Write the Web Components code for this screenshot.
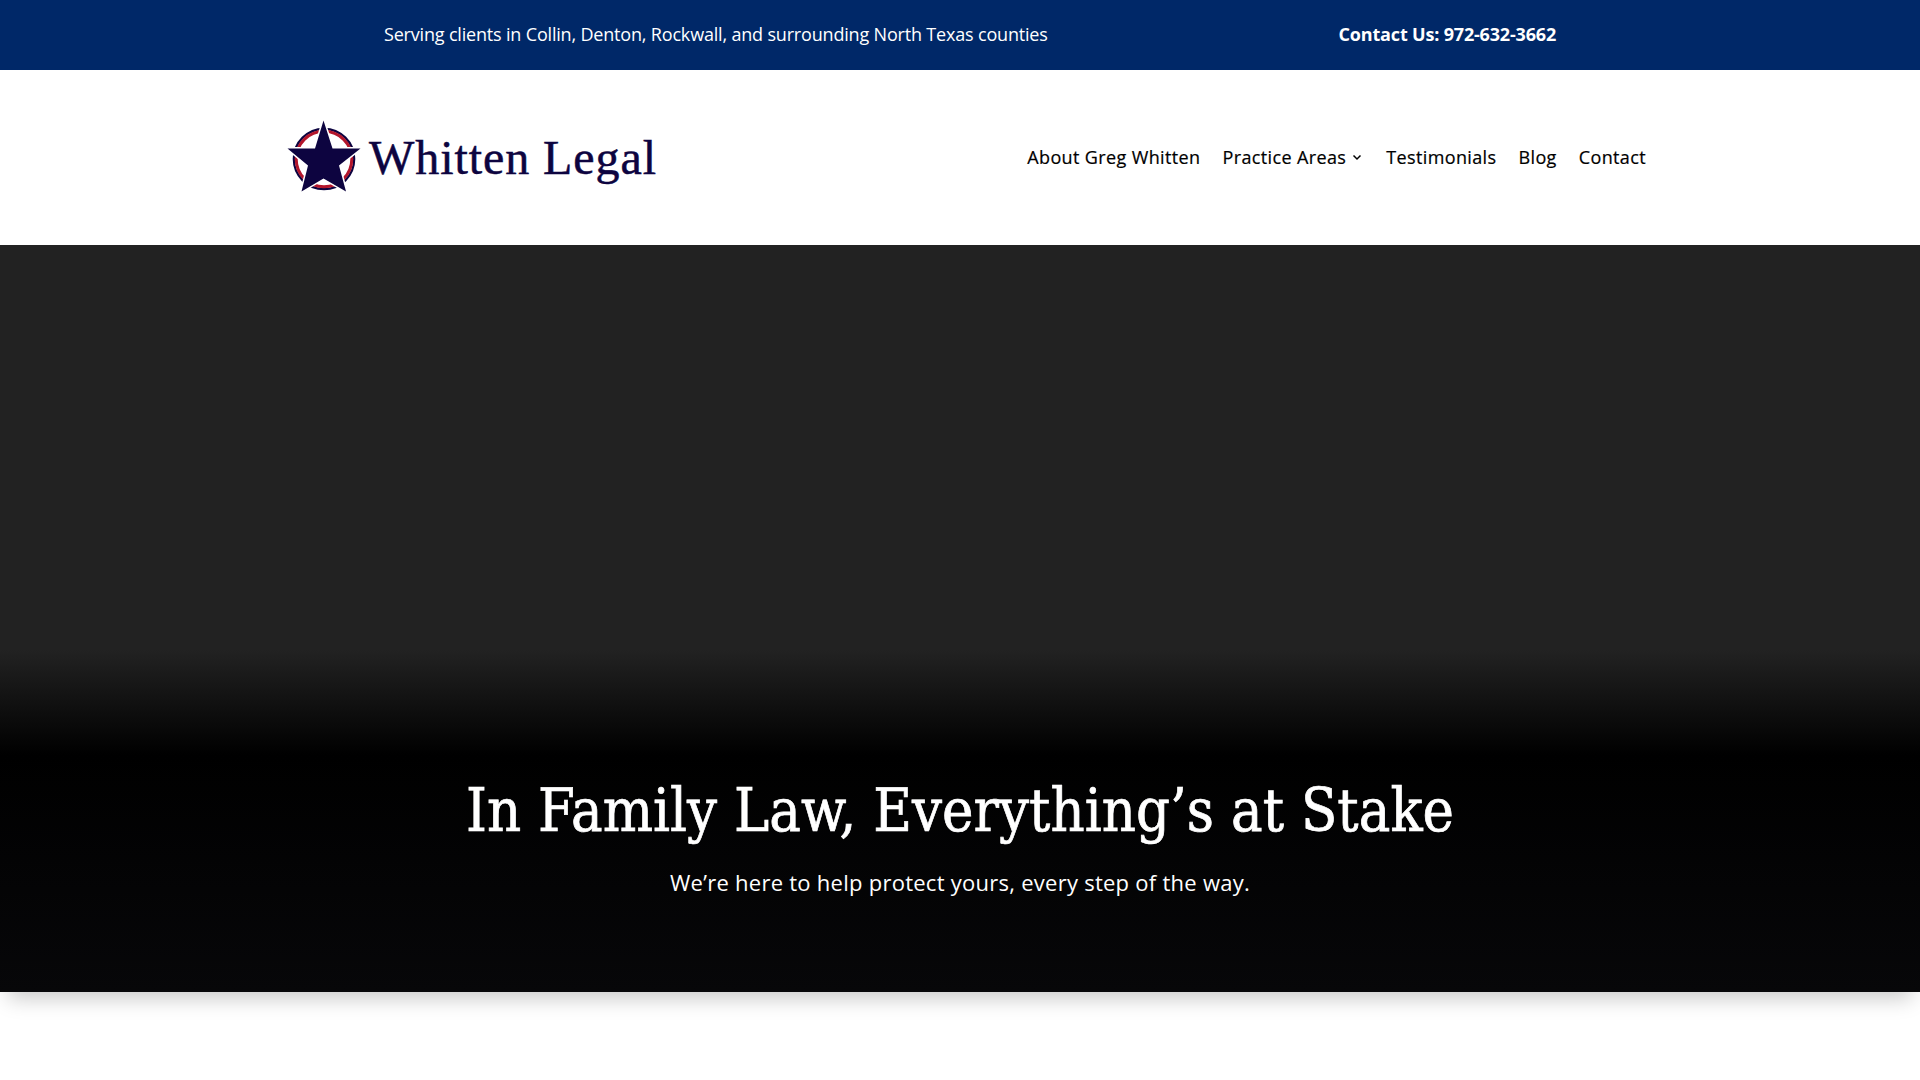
<!DOCTYPE html>
<html lang="en">
<head>
<meta charset="utf-8">
<title>Whitten Legal</title>
<style>
    html, body { margin: 0; padding: 0; background: #fff; }
    body { font-family: "Open Sans", sans-serif; height: 1080px; overflow: hidden; }
</style>
</head>
<body>
<top-bar>
    <span>Serving clients in Collin, Denton, Rockwall, and surrounding North Texas counties</span>
    <span slot="contact">Contact Us: 972-632-3662</span>
</top-bar>
<site-header>
    <site-logo slot="logo">Whitten Legal</site-logo>
    <nav-link>About Greg Whitten</nav-link>
    <nav-link caret>Practice Areas</nav-link>
    <nav-link>Testimonials</nav-link>
    <nav-link>Blog</nav-link>
    <nav-link>Contact</nav-link>
</site-header>
<hero-banner>
    <span slot="title">In Family Law, Everything’s at Stake</span>
    We’re here to help protect yours, every step of the way.
</hero-banner>

<script>
class TopBar extends HTMLElement {
    connectedCallback() {
        this.attachShadow({ mode: 'open' });
        this.shadowRoot.innerHTML = `
            <style>
                :host {
                    display: flex;
                    align-items: center;
                    height: 70px;
                    padding: 0 364px 2px 384px;
                    box-sizing: border-box;
                    background: #002868;
                    color: #fff;
                    font: 400 18px/1 "Open Sans", sans-serif;
                    letter-spacing: -0.18px;
                }
                .contact { margin-left: auto; font-weight: 700; }
            </style>
            <slot></slot>
            <div class="contact"><slot name="contact"></slot></div>
        `;
    }
}

class SiteLogo extends HTMLElement {
    connectedCallback() {
        this.attachShadow({ mode: 'open' });
        this.shadowRoot.innerHTML = `
            <style>
                :host {
                    display: flex;
                    align-items: center;
                    gap: 8px;
                    color: #0d0440;
                    font: 400 48px/1 "Liberation Serif", serif;
                    letter-spacing: 0.93px;
                    -webkit-text-stroke: 0.5px #0d0440;
                    white-space: nowrap;
                }
                svg { width: 74px; height: 72px; flex: none; overflow: visible; }
            </style>
            <svg viewBox="0 0 74 72" aria-hidden="true">
                <circle cx="37" cy="37" r="30.2" fill="none" stroke="#0d0440" stroke-width="2.2"/>
                <circle cx="37" cy="37" r="27.8" fill="none" stroke="#b3152b" stroke-width="3"/>
                <path d="M36.5 -1.5 45.5 26.5H73.5L52 43.5 59 69.5 36.5 56.5 14.5 69.5 21 43.5 .5 26.5H28Z" fill="#0d0440" stroke="#fff" stroke-width="3" paint-order="stroke"/>
            </svg>
            <slot></slot>
        `;
    }
}

class NavLink extends HTMLElement {
    connectedCallback() {
        this.attachShadow({ mode: 'open' });
        const caret = this.hasAttribute('caret')
            ? '<svg viewBox="0 0 10 10" width="10" height="10"><path d="M1.5 3.5 5 7 8.5 3.5" fill="none" stroke="#000" stroke-width="1.5"/></svg>'
            : '';
        this.shadowRoot.innerHTML = `
            <style>
                :host {
                    display: inline-flex;
                    align-items: center;
                    gap: 6px;
                    color: #000;
                    font: 500 18px/1 "Open Sans", sans-serif;
                    letter-spacing: 0.37px;
                    -webkit-text-stroke: 0.2px #000;
                    white-space: nowrap;
                }
                svg { margin-right: 2px; }
            </style>
            <slot></slot>${caret}
        `;
    }
}

class SiteHeader extends HTMLElement {
    connectedCallback() {
        this.attachShadow({ mode: 'open' });
        this.shadowRoot.innerHTML = `
            <style>
                :host {
                    display: flex;
                    align-items: center;
                    height: 175px;
                    padding: 0 274px 0 287px;
                    box-sizing: border-box;
                    background: #fff;
                }
                nav { display: flex; align-items: center; gap: 22px; margin-left: auto; padding-bottom: 2px; }
            </style>
            <slot name="logo"></slot>
            <nav><slot></slot></nav>
        `;
    }
}

class HeroBanner extends HTMLElement {
    connectedCallback() {
        this.attachShadow({ mode: 'open' });
        this.shadowRoot.innerHTML = `
            <style>
                :host {
                    display: flex;
                    flex-direction: column;
                    align-items: center;
                    justify-content: flex-end;
                    height: 747px;
                    padding-bottom: 94px;
                    box-sizing: border-box;
                    background: linear-gradient(to bottom, #222 0, #222 405px, #000 510px, #070709 100%);
                    box-shadow: 0 14px 20px -8px rgba(0, 0, 0, 0.22);
                    color: #fff;
                }
                h1 {
                    margin: 0 0 20px;
                    font: 400 59px/1.2 "DejaVu Serif Condensed", "DejaVu Serif", serif;
                    -webkit-text-stroke: 0.7px #fff;
                    letter-spacing: 0.05px;
                    white-space: nowrap;
                }
                p {
                    margin: 0;
                    font: 400 22px/1.4 "Open Sans", sans-serif;
                    letter-spacing: 0.26px;
                }
            </style>
            <h1><slot name="title"></slot></h1>
            <p><slot></slot></p>
        `;
    }
}

customElements.define('top-bar', TopBar);
customElements.define('site-logo', SiteLogo);
customElements.define('nav-link', NavLink);
customElements.define('site-header', SiteHeader);
customElements.define('hero-banner', HeroBanner);
</script>
</body>
</html>
